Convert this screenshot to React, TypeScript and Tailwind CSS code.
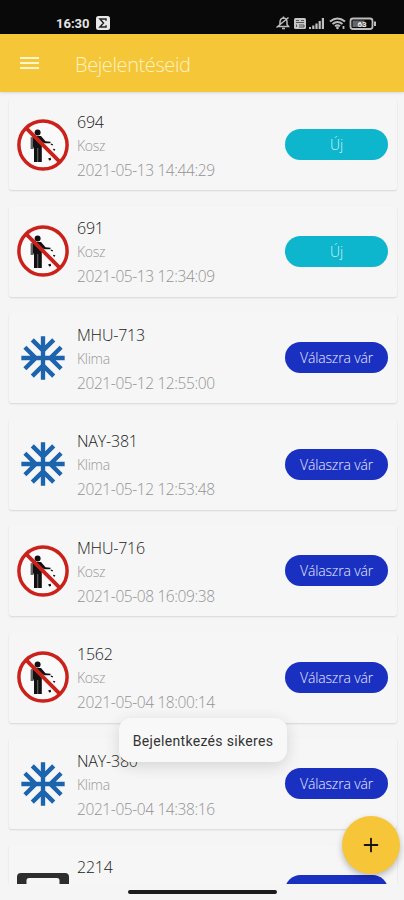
import { Plus } from 'lucide-react'

type IconName = 'litter' | 'snowflake' | 'phone'

interface Report {
  code: string
  icon: IconName
  category?: string
  date?: string
  status?: string
  isNew?: boolean
}

const REPORTS: Report[] = [
  { code: '694', icon: 'litter', category: 'Kosz', date: '2021-05-13 14:44:29', status: 'Új', isNew: true },
  { code: '691', icon: 'litter', category: 'Kosz', date: '2021-05-13 12:34:09', status: 'Új', isNew: true },
  { code: 'MHU-713', icon: 'snowflake', category: 'Klima', date: '2021-05-12 12:55:00', status: 'Válaszra vár' },
  { code: 'NAY-381', icon: 'snowflake', category: 'Klima', date: '2021-05-12 12:53:48', status: 'Válaszra vár' },
  { code: 'MHU-716', icon: 'litter', category: 'Kosz', date: '2021-05-08 16:09:38', status: 'Válaszra vár' },
  { code: '1562', icon: 'litter', category: 'Kosz', date: '2021-05-04 18:00:14', status: 'Válaszra vár' },
  { code: 'NAY-380', icon: 'snowflake', category: 'Klima', date: '2021-05-04 14:38:16', status: 'Válaszra vár' },
  { code: '2214', icon: 'phone' },
]

function NoLitterIcon() {
  return (
    <svg viewBox="0 0 52 52" className="size-[52px]">
      <circle cx="26" cy="26" r="24.2" fill="#fafafa" />
      <path d="M13.600 18.500l3-1.500v13h-3z" fill="#666" />
      <g fill="#111">
        <circle cx="20.600" cy="13.400" r="3" />
        <path d="M16 17h8l4.500 5.300 5 .4v1.600l-6-.1-2.700-1.200V43h-3.700V29h-.4v14H17V28.500h-1z" />
        <path d="M34 24.600l2 .6-.3 1.200-2-.6zM36.500 29.700l1.800.5-.5 1.500-1.800-.6zM31.200 39.200l2.500-.4.4 2.300-2 .3z" />
      </g>
      <path d="M9.200 9.200l33.600 33.600" stroke="#cb211b" strokeWidth="3.800" />
      <circle cx="26" cy="26" r="24.100" fill="none" stroke="#cb211b" strokeWidth="3.500" />
    </svg>
  )
}

function SnowflakeIcon() {
  return (
    <svg viewBox="0 0 24 24" className="size-[52px]" fill="#1c64ae">
      <path d="M22 11h-4.17l3.24-3.24-1.41-1.42L15 11h-2V9l4.66-4.66-1.42-1.41L13 6.17V2h-2v4.17L7.76 2.93 6.34 4.34 11 9v2H9L4.34 6.34 2.93 7.76 6.17 11H2v2h4.17l-3.24 3.24 1.41 1.42L9 13h2v2l-4.66 4.66 1.42 1.41L11 17.83V22h2v-4.17l3.24 3.24 1.42-1.41L13 15v-2h2l4.66 4.66 1.41-1.42L17.83 13H22z" />
    </svg>
  )
}

function PhoneIcon() {
  return (
    <svg viewBox="0 0 52 52" className="size-[52px]" fill="#2d2d2d">
      <path d="M4 9h44q4 0 4 4v11h-9.500v-7.500q0-2.500-2.500-2.500H12q-2.500 0-2.500 2.500V24H0V13q0-4 4-4z" />
    </svg>
  )
}

function StatusBar() {
  return (
    <div className="flex h-[34px] items-end justify-between bg-[#090909] pr-[26px] pb-[3px] pl-14 text-[#e4e4e4]">
      <div className="flex h-4 items-center gap-[6px]">
        <span className="pt-px font-['Roboto',sans-serif] text-[13px] leading-4 font-bold">16:30</span>
        <svg viewBox="0 0 14 14" className="size-[14px]">
          <rect width="14" height="14" rx="2.5" fill="#e8e8e8" />
          <path d="M10 4.700V3H4l3.500 4L4 11h6V9.300" fill="none" stroke="#222" strokeWidth="1.5" />
        </svg>
      </div>
      <svg viewBox="0 0 104 16" className="h-4 w-[104px]" fill="none" stroke="#bcbcbc">
        <path d="M4.500 11.500l1.500-2V7q0-3.500 3.500-4 3.500.5 3.500 4v2.500l1.500 2zM8 13.500h3M2.500 12.500l12-10M9.500 1.500V3" strokeWidth="1.500" />
        <rect x="20" y="3" width="12" height="11" rx="1.500" fill="#c6c6c6" stroke="none" />
        <path d="M22 5.500h3M22 7.500h8M27 5.500h3M22.500 9.500v2.500M25 10h5v2h-5" stroke="#555" strokeWidth="1" />
        <g fill="#c0c0c0" stroke="none">
          <path d="M35 12h2v2h-2zM38.200 10.500h2.200V14h-2.200zM41.400 8.500h2.200V14h-2.200zM44.600 6h2.200v8h-2.200zM47.800 3h2.200v11h-2.200z" />
        </g>
        <path d="M56 6.500q7.500-6 15 0M58.500 9q5-4 10 0M61 11.300q2.500-2 5 0" strokeWidth="2.100" />
        <circle cx="63.500" cy="13" r="1.300" fill="#c0c0c0" stroke="none" />
        <path d="M69.500 11v3" strokeWidth="1.800" />
        <rect x="76.500" y="3.500" width="22" height="10.500" rx="2.500" strokeWidth="1.800" />
        <rect x="78.500" y="5.500" width="12" height="6.500" fill="#666" stroke="none" />
        <path d="M101 6.500v4.500" strokeWidth="2" />
        <text x="88" y="11.600" textAnchor="middle" fontSize="8" fontWeight="700" fontFamily="Roboto, sans-serif" fill="#eee" stroke="none">63</text>
      </svg>
    </div>
  )
}

function StatusBadge({ label, isNew }: { label?: string; isNew?: boolean }) {
  if (isNew) {
    return (
      <span className="h-[31px] w-[103px] rounded-full bg-[#0db5cd] text-center text-[14px] leading-[31px] font-light text-[#d5f3f7]">
        {label}
      </span>
    )
  }
  return (
    <span className="h-[31px] w-[103px] rounded-full bg-[#1a30c0] text-center text-[14px] leading-[31px] font-light tracking-[-0.150px] text-[#e8eaff]">
      {label}
    </span>
  )
}

function ReportCard({ report }: { report: Report }) {
  return (
    <div className="flex h-[91px] shrink-0 items-center rounded-[3px] bg-[#f6f6f6] pr-[9px] pl-2 shadow-[0_1px_2px_rgba(0,0,0,0.13)]">
      {report.icon === 'litter' && <NoLitterIcon />}
      {report.icon === 'snowflake' && <SnowflakeIcon />}
      {report.icon === 'phone' && <PhoneIcon />}
      <div className="ml-2 h-[74px] flex-1 pt-[2px]">
        <h2 className="text-[16px] leading-6 font-light tracking-[-0.2px] text-[#222]">{report.code}</h2>
        <p className="text-[14px] leading-6 font-light tracking-[-0.3px] text-[#999]">{report.category}</p>
        <p className="text-[15.500px] leading-6 font-light tracking-[-0.4px] text-[#939393]">{report.date}</p>
      </div>
      <StatusBadge label={report.status} isNew={report.isNew} />
    </div>
  )
}

export default function App() {
  return (
    <div className="relative flex h-[900px] w-[404px] flex-col overflow-hidden bg-[#f5f5f5] font-['Open_Sans','Noto_Sans',sans-serif]">
      <StatusBar />

      {/* App bar */}
      <header className="z-10 flex h-[58px] shrink-0 items-center bg-[#f4c638] pl-5 shadow-[0_1px_3px_rgba(0,0,0,0.12)]">
        <div className="flex w-[19px] flex-col gap-[3px]">
          <span className="h-[2px] bg-[#fff5cf]" />
          <span className="h-[2px] bg-[#fff5cf]" />
          <span className="h-[2px] bg-[#fff5cf]" />
        </div>
        <h1 className="mt-[3px] ml-9 text-[20px] leading-7 font-light tracking-[-0.4px] text-[#fff3c4]">Bejelentéseid</h1>
      </header>

      {/* Reports */}
      <main className="flex h-[792px] shrink-0 flex-col gap-[15.500px] overflow-hidden pt-[7.400px] pr-[7px] pl-[9px]">
        {REPORTS.map((report) => (
          <ReportCard key={report.code} report={report} />
        ))}
      </main>

      {/* Gesture bar */}
      <div className="flex flex-1 justify-center pt-[6px]">
        <span className="h-[4px] w-[149px] rounded-full bg-[#1c1c1c]" />
      </div>

      {/* Toast */}
      <div className="absolute top-[718px] left-[119px] z-20 flex h-11 w-[168px] items-center justify-center rounded-xl bg-[#f8f8f8] pt-[2px] font-['Roboto',sans-serif] text-[14px] tracking-[0.330px] whitespace-nowrap text-[#333] shadow-[0_4px_16px_rgba(0,0,0,0.14)]">
        Bejelentkezés sikeres
      </div>

      <button className="absolute top-[816px] left-[342px] z-20 flex size-[58px] items-center justify-center rounded-full bg-[#f6c638] shadow-[0_3px_6px_rgba(0,0,0,0.25)]">
        <Plus size={22} strokeWidth={2} color="#151515" />
      </button>
    </div>
  )
}
